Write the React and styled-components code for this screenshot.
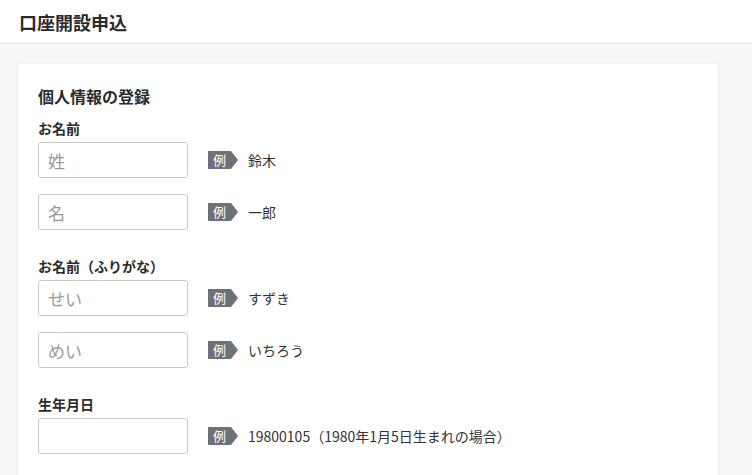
import React from 'react';
import styled, { createGlobalStyle } from 'styled-components';

const GlobalStyle = createGlobalStyle`
  html, body {
    margin: 0;
    padding: 0;
    background: #f7f8fa;
    font-family: "Noto Sans CJK JP", "Noto Sans", sans-serif;
    color: #333;
  }
`;

const Header = styled.header`
  height: 43px;
  background: #fff;
  border-bottom: 1px solid #e6e7e9;
  display: flex;
  align-items: center;
  padding-left: 19px;
`;

const Title = styled.h1`
  margin: 0;
  font-size: 18px;
  font-weight: 700;
  color: #2b2b2b;
`;

const Main = styled.main`
  padding: 20px 18px;
`;

const Card = styled.section`
  width: 700px;
  box-sizing: border-box;
  background: #fff;
  border-radius: 3px;
  box-shadow: 0 1px 3px rgba(0, 0, 0, 0.13);
  padding: 22px 20px 30px;
`;

const CardTitle = styled.h2`
  margin: 0;
  font-size: 16px;
  line-height: 20px;
  font-weight: 700;
  color: #2b2b2b;
`;

const Group = styled.div`
  margin-top: ${p => p.$first ? '13px' : '27px'};
`;

const Label = styled.div`
  font-size: 14px;
  line-height: 18px;
  font-weight: 700;
  color: #2b2b2b;
  margin-bottom: 5px;
`;

const Row = styled.div`
  display: flex;
  align-items: center;
  height: 36px;
  & + & {
    margin-top: 16px;
  }
`;

const Input = styled.input`
  width: 150px;
  height: 36px;
  box-sizing: border-box;
  border: 1px solid #c9c9c9;
  border-radius: 3px;
  padding: 0 9px;
  font-family: inherit;
  font-size: 17px;
  color: #333;
  outline: none;
  &::placeholder {
    color: #9a9a9a;
  }
`;

const Badge = styled.span`
  margin-left: 20px;
  width: 30px;
  height: 18px;
  background: #6d7278;
  color: #fff;
  font-size: 13px;
  line-height: 18px;
  padding-left: 5px;
  box-sizing: border-box;
  clip-path: polygon(0 0, 23px 0, 30px 50%, 23px 100%, 0 100%);
`;

const Example = styled.span`
  margin-left: 10px;
  font-size: 14px;
  color: #333;
`;

const Field = ({ placeholder, example }) => (
  <Row>
    <Input placeholder={placeholder} />
    <Badge>例</Badge>
    <Example>{example}</Example>
  </Row>
);

export default function App() {
  return (
    <>
      <GlobalStyle />
      <Header>
        <Title>口座開設申込</Title>
      </Header>
      <Main>
        <Card>
          <CardTitle>個人情報の登録</CardTitle>
          <Group $first>
            <Label>お名前</Label>
            <Field placeholder="姓" example="鈴木" />
            <Field placeholder="名" example="一郎" />
          </Group>
          <Group>
            <Label>お名前（ふりがな）</Label>
            <Field placeholder="せい" example="すずき" />
            <Field placeholder="めい" example="いちろう" />
          </Group>
          <Group>
            <Label>生年月日</Label>
            <Field placeholder="" example="19800105（1980年1月5日生まれの場合）" />
          </Group>
        </Card>
      </Main>
    </>
  );
}
